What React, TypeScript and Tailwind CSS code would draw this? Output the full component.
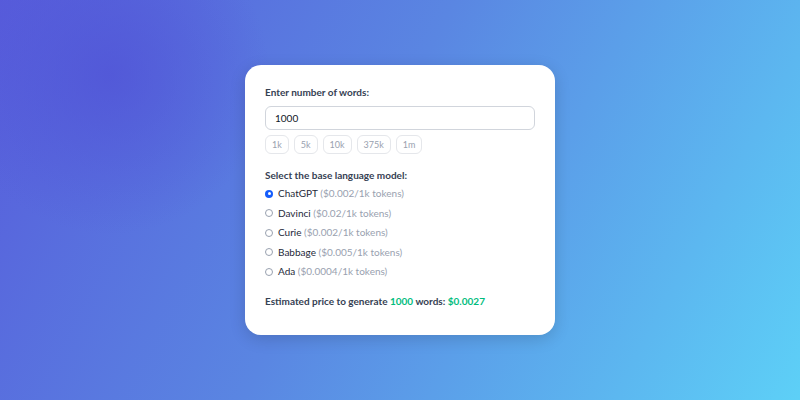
import { useState } from "react"

const presets = [
  { label: "1k", value: 1000 },
  { label: "5k", value: 5000 },
  { label: "10k", value: 10000 },
  { label: "375k", value: 375000 },
  { label: "1m", value: 1000000 },
]

const models = [
  { name: "ChatGPT", price: 0.002 },
  { name: "Davinci", price: 0.02 },
  { name: "Curie", price: 0.002 },
  { name: "Babbage", price: 0.005 },
  { name: "Ada", price: 0.0004 },
]

export default function App() {
  const [words, setWords] = useState("1000")
  const [model, setModel] = useState(0)

  const n = parseInt(words) || 0
  const tokens = n / 0.75
  const cost = (tokens / 1000) * models[model].price

  return (
    <div
      className="w-full h-[400px] flex items-center justify-center bg-[radial-gradient(circle_at_110px_75px,rgba(80,82,214,0.7),rgba(80,82,214,0)_160px),linear-gradient(118deg,#575cdb_0%,#5a86e2_45%,#5dd0f7_100%)]"
      style={{ fontFamily: 'Lato, "Noto Sans", sans-serif' }}
    >
      <div className="w-[310px] h-[270px] bg-white rounded-2xl shadow-[0_4px_16px_rgba(0,0,0,0.15)] px-5 pt-5">
        <p className="text-[10px] leading-[14px] font-bold text-gray-700 mb-[5px]">Enter number of words:</p>
        <input
          value={words}
          onChange={(e) => setWords(e.target.value)}
          className="w-full h-6 border border-gray-300 rounded-md px-[9px] text-[10px] text-gray-900 outline-none"
        />
        <div className="flex gap-[5px] mt-[5px]">
          {presets.map((p) => (
            <button
              key={p.label}
              onClick={() => setWords(String(p.value))}
              className="h-[19px] px-[6px] border border-gray-200 rounded-md text-[9px] text-gray-400 leading-none"
            >
              {p.label}
            </button>
          ))}
        </div>

        <p className="text-[10px] leading-[14px] font-bold text-gray-700 mt-[14px] mb-[2px]">
          Select the base language model:
        </p>
        <div>
          {models.map((m, i) => (
            <label key={m.name} className="flex items-center h-[19.5px] cursor-pointer" onClick={() => setModel(i)}>
              {model === i ? (
                <span className="w-2 h-2 rounded-full bg-blue-600 flex items-center justify-center">
                  <span className="w-[3px] h-[3px] rounded-full bg-white" />
                </span>
              ) : (
                <span className="w-2 h-2 rounded-full border border-gray-400 bg-white" />
              )}
              <span className="ml-[5px] text-[10px] text-gray-800">
                {m.name} <span className="text-gray-400">(${m.price}/1k tokens)</span>
              </span>
            </label>
          ))}
        </div>

        <p className="text-[10px] leading-[14px] font-bold text-gray-700 mt-3">
          Estimated price to generate <span className="text-emerald-500">{n}</span> words:{" "}
          <span className="text-emerald-500">${cost.toFixed(4)}</span>
        </p>
      </div>
    </div>
  )
}
